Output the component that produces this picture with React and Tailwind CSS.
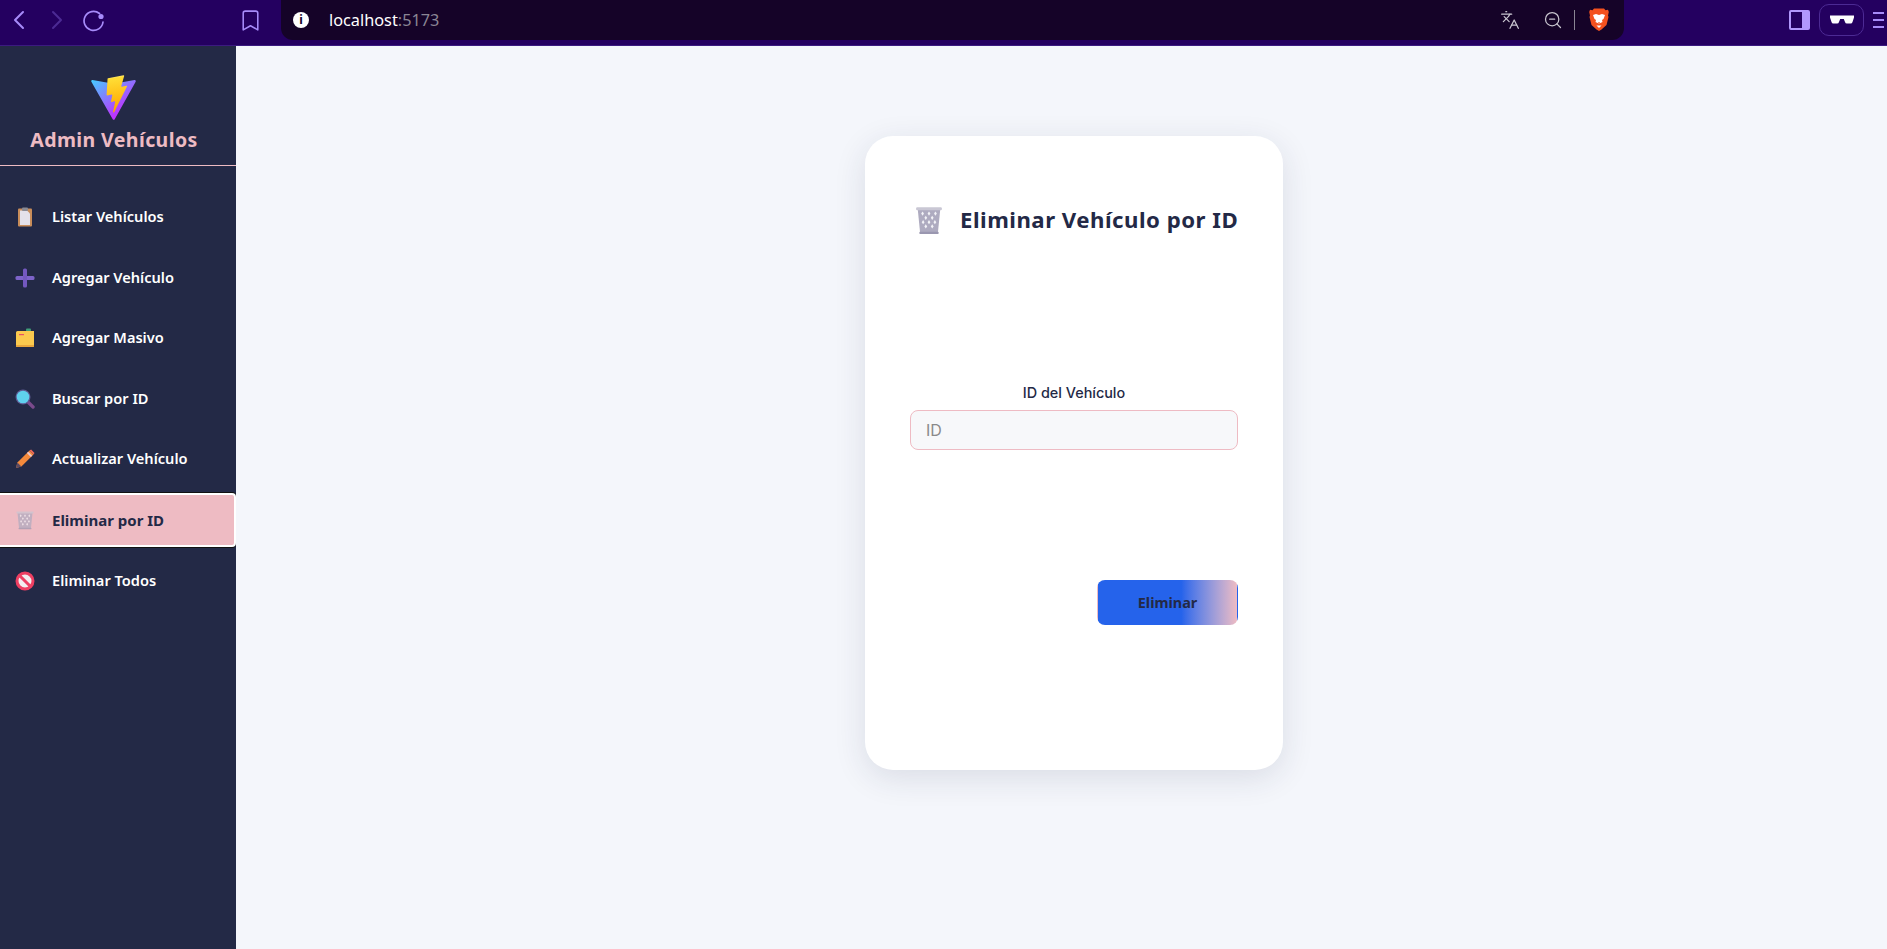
import { ChevronLeft, ChevronRight, Bookmark, Languages, ZoomOut } from 'lucide-react';

const FONT = "font-['Noto_Sans',sans-serif]";

function ViteLogo() {
  return (
    <svg className="mr-[2px]" width="47" height="46" viewBox="0 0 410 404" fill="none">
      <defs>
        <linearGradient id="vite-a" x1="6" y1="33" x2="235" y2="344" gradientUnits="userSpaceOnUse">
          <stop stopColor="#41D1FF" />
          <stop offset="1" stopColor="#BD34FE" />
        </linearGradient>
        <linearGradient id="vite-b" x1="194.651" y1="8.81818" x2="236.076" y2="292.989" gradientUnits="userSpaceOnUse">
          <stop stopColor="#FFEA83" />
          <stop offset="0.0833" stopColor="#FFDD35" />
          <stop offset="1" stopColor="#FFA800" />
        </linearGradient>
      </defs>
      <path d="M399.641 59.5246L215.643 388.545C211.844 395.338 202.084 395.378 198.228 388.618L10.5817 59.5563C6.38087 52.1896 12.6802 43.2665 21.0281 44.7586L205.223 77.6824C206.398 77.8924 207.601 77.8904 208.776 77.6763L389.119 44.8058C397.439 43.2894 403.768 52.1434 399.641 59.5246Z" fill="url(#vite-a)" />
      <path d="M292.965 1.5744L156.801 28.2552C154.563 28.6937 152.906 30.5903 152.771 32.8664L144.395 174.33C144.198 177.662 147.258 180.248 150.51 179.498L188.42 170.749C191.967 169.931 195.172 173.055 194.443 176.622L183.18 231.775C182.422 235.487 185.907 238.661 189.532 237.56L212.947 230.446C216.577 229.344 220.065 232.527 219.297 236.242L201.398 322.875C200.278 328.294 207.486 331.249 210.492 326.603L212.5 323.5L323.454 102.072C325.312 98.3645 322.108 94.137 318.036 94.9228L279.014 102.454C275.347 103.161 272.227 99.746 273.262 96.1583L298.731 7.86689C299.767 4.27314 296.636 0.855181 292.965 1.5744Z" fill="url(#vite-b)" />
    </svg>
  );
}

function ClipboardIcon() {
  return (
    <svg width="20" height="20" viewBox="0 0 20 20">
      <rect x="3" y="1.5" width="14" height="18" rx="1" fill="#c98d5a" />
      <path d="M5 3.5h7l3 3v11.5H5z" fill="#e4e1ea" />
      <rect x="7" y="0.5" width="6" height="3.5" rx="1" fill="#8a8a94" />
    </svg>
  );
}

function PlusIcon() {
  return (
    <svg width="20" height="20" viewBox="0 0 20 20">
      <rect x="0.5" y="8" width="19" height="4" rx="1.5" fill="#7d63c9" />
      <rect x="8" y="0.5" width="4" height="19" rx="1.5" fill="#7358bf" />
    </svg>
  );
}

function FolderIcon() {
  return (
    <svg width="20" height="20" viewBox="0 0 20 20">
      <rect x="11" y="0.5" width="5" height="3" rx="1" fill="#3f9e78" />
      <path d="M1 4.5a1.5 1.5 0 0 1 1.5-1.5H19v15a1 1 0 0 1-1 1H2a1 1 0 0 1-1-1z" fill="#fbc94e" />
      <path d="M1 17h18v1a1 1 0 0 1-1 1H2a1 1 0 0 1-1-1z" fill="#e9a63c" />
      <rect x="4" y="6" width="5" height="1.2" fill="#e8506a" />
    </svg>
  );
}

function SearchIcon() {
  return (
    <svg width="20" height="20" viewBox="0 0 20 20">
      <path d="M12 12l6 6" stroke="#7a4a8c" strokeWidth="3.4" strokeLinecap="round" />
      <circle cx="8" cy="8" r="7.5" fill="#5f5a94" />
      <circle cx="8" cy="8" r="6.3" fill="#5fd0ee" />
    </svg>
  );
}

function PencilIcon() {
  return (
    <svg width="20" height="20" viewBox="0 0 20 20">
      <path d="M1 19l1.4-5.4L14.5 1.5l4 4L6.4 17.6z" fill="#f58a3c" />
      <path d="M14.5 1.5l1.6-1 3.4 3.4-1 1.6z" fill="#f26a5a" />
      <path d="M13.2 2.8l4 4-1.3 1.3-4-4z" fill="#ecc9cf" />
      <path d="M1 19l1.4-5.4 4 4z" fill="#5b4a63" />
    </svg>
  );
}

const TRASH_HOLES = [
  [8, 8], [14, 8], [20, 8],
  [11, 12], [17, 12],
  [8.5, 16], [14, 16], [19.5, 16],
  [11, 20], [17, 20],
];

function TrashIcon({ size = 20 }) {
  return (
    <svg width={size} height={size} viewBox="0 0 28 28">
      <path d="M3.5 4h21l-2.2 22H5.700z" fill="#aeabc0" />
      {TRASH_HOLES.map(([x, y]) => (
        <path key={`${x}-${y}`} d={`M${x} ${y - 2}l1.300 2-1.300 2-1.300-2z`} fill="#f3f3f7" />
      ))}
      <rect x="2" y="2" width="24" height="3" rx="1" fill="#c9c7d4" />
      <rect x="5" y="25" width="18" height="2" rx="0.600" fill="#9a97b0" />
    </svg>
  );
}

function NoEntryIcon() {
  return (
    <svg width="20" height="20" viewBox="0 0 20 20">
      <circle cx="10" cy="10" r="8" fill="#f3eef0" stroke="#ee3f62" strokeWidth="3" />
      <path d="M4.500 4.500l11 11" stroke="#ee3f62" strokeWidth="3" />
    </svg>
  );
}

function BraveIcon() {
  return (
    <svg width="20" height="24" viewBox="0 0 20 24">
      <path d="M5 0.500h10l1.500 1.700 2.500-.5.800 2.300-.8 3.500.5 1.500-2 8-5 4.500-2.500 1.500-2.500-1.500-5-4.500-2-8 .5-1.500L.2 4l.8-2.300 2.500.5z" fill="#f4511e" />
      <path d="M4 7l3-1 3 1 3-1 3 1-1.500 4-1.500 1 .5 2-2 1-1.500.5-1.500-.5-2-1 .5-2-1.500-1z" fill="#fff" />
      <path d="M7.500 17.500h5L10 20z" fill="#fff" />
      <path d="M9 14h2l-1 1.200z" fill="#f4511e" />
    </svg>
  );
}

function ReloadIcon() {
  return (
    <svg width="24" height="24" viewBox="0 0 24 24" fill="none">
      <path d="M17.500 5.500A9.500 9.500 0 1 0 21 14" stroke="#a78bfa" strokeWidth="1.700" strokeLinecap="round" />
      <circle cx="19" cy="8.500" r="2.600" fill="#a78bfa" />
    </svg>
  );
}

function GlassesIcon() {
  return (
    <svg width="24" height="10" viewBox="0 0 24 10">
      <path d="M0 0.500h24v2l-1.500 4.500a2 2 0 0 1-2 1.500h-3.500a2 2 0 0 1-2-1.500L13.800 4h-3.600L9 7a2 2 0 0 1-2 1.500H3.500a2 2 0 0 1-2-1.500L0 2.500z" fill="#fff" />
    </svg>
  );
}

function BrowserBar() {
  return (
    <div className="flex h-[46px] shrink-0 border-b border-[#3b1a80] bg-[#240060]">
      <div className="flex w-[281px] shrink-0 items-center pb-[5px]">
        <ChevronLeft className="ml-[3px] text-[#a78bfa]" size={32} strokeWidth={1.5} />
        <ChevronRight className="ml-[6px] text-[#4c2a94]" size={32} strokeWidth={1.5} />
        <span className="ml-[9px]">
          <ReloadIcon />
        </span>
        <Bookmark className="ml-[132px] text-[#a78bfa]" size={25} strokeWidth={1.5} />
      </div>
      <div className="flex h-[40px] w-[1343px] items-center rounded-b-[12px] rounded-t-none bg-[#150328]">
        <span className="ml-[12px] flex h-4 w-4 items-center justify-center rounded-full bg-white text-[12px] font-bold leading-none text-[#150328]">
          i
        </span>
        <span className={`ml-[20px] text-[16.300px] text-white ${FONT}`}>
          localhost<span className="text-[#8a8594]">:5173</span>
        </span>
        <div className="ml-auto flex items-center pr-[15px]">
          <Languages className="text-[#c8c5cf]" size={20} strokeWidth={1.5} />
          <ZoomOut className="ml-[23px] text-[#c8c5cf]" size={20} strokeWidth={1.5} />
          <span className="ml-[11px] h-[20px] w-px bg-[#8a8594]" />
          <span className="ml-[14px] flex">
            <BraveIcon />
          </span>
        </div>
      </div>
      <div className="flex flex-1 items-center pb-[5px]">
        <span className="ml-[165px] flex h-[20px] w-[21px] justify-end rounded-[2px] border-2 border-[#b197fc]">
          <span className="h-full w-[6px] bg-[#b197fc]" />
        </span>
        <span className="ml-[9px] flex h-[32px] w-[45px] items-center justify-center rounded-[10px] border border-[#4c2a94]">
          <GlassesIcon />
        </span>
        <span className="ml-[9px] flex w-[11px] flex-col gap-[5px] overflow-hidden">
          <span className="h-[2px] w-[14px] bg-[#a78bfa]" />
          <span className="h-[2px] w-[14px] bg-[#a78bfa]" />
          <span className="h-[2px] w-[14px] bg-[#a78bfa]" />
        </span>
      </div>
    </div>
  );
}

const NAV_ITEMS = [
  { label: 'Listar Vehículos', icon: <ClipboardIcon /> },
  { label: 'Agregar Vehículo', icon: <PlusIcon /> },
  { label: 'Agregar Masivo', icon: <FolderIcon /> },
  { label: 'Buscar por ID', icon: <SearchIcon /> },
  { label: 'Actualizar Vehículo', icon: <PencilIcon /> },
  { label: 'Eliminar por ID', icon: <TrashIcon />, active: true },
  { label: 'Eliminar Todos', icon: <NoEntryIcon /> },
];

function Sidebar() {
  return (
    <aside className={`flex w-[236px] shrink-0 flex-col bg-[#232946] ${FONT}`}>
      <div className="flex h-[120px] flex-col items-center border-b border-[#eebbc3] pt-[29px] pr-[8px]">
        <ViteLogo />
        <h1 className="mt-[5px] text-[19.500px] font-bold leading-[28px] tracking-[0.4px] text-[#eebbc3]">
          Admin Vehículos
        </h1>
      </div>
      <nav className="mt-[24px] flex flex-col gap-[6.6px]">
        {NAV_ITEMS.map((item) => (
          <div
            key={item.label}
            className={`flex h-[54px] items-center pl-[15px] ${
              item.active
                ? 'rounded-r-[4px] border-y-2 border-r-2 border-white bg-[#eebbc3] text-[15px] font-bold text-[#232946] shadow-[0_-1px_0_#111,0_1px_0_#111]'
                : 'text-[14.600px] font-semibold text-white'
            }`}
          >
            <span className={`flex w-[37px] shrink-0 ${item.active ? 'opacity-70' : ''}`}>{item.icon}</span>
            {item.label}
          </div>
        ))}
      </nav>
    </aside>
  );
}

function DeleteCard() {
  return (
    <div className="flex h-[634px] w-[418px] flex-col rounded-[28px] bg-white px-[45px] pt-[66px] shadow-[0_8px_32px_rgba(35,41,70,0.12)]">
      <h2 className={`flex h-[36px] items-center pl-[4px] text-[22.200px] font-bold tracking-[0.5px] whitespace-nowrap text-[#232946] ${FONT}`}>
        <span className="mr-[16px] flex">
          <TrashIcon size={30} />
        </span>
        Eliminar Vehículo por ID
      </h2>
      <label className="mt-[143px] text-center text-[14.400px] font-medium leading-[24px] text-[#232946] font-['Inter',sans-serif]">
        ID del Vehículo
      </label>
      <input
        placeholder="ID"
        className="mt-[5px] h-[40px] w-full rounded-[8px] border border-[#eebbc3] bg-[#f7f8fa] px-[15px] font-['Inter',sans-serif] text-[16px] text-[#232946] placeholder-[#8a8a8a] outline-none"
      />
      <div className="mt-[130px] flex justify-end">
        <button className={`h-[45px] w-[141px] cursor-pointer rounded-[8px] border border-transparent bg-linear-to-r from-[#2563eb] from-60% to-[#eebbc3] text-[14.400px] font-bold text-[#232946] ${FONT}`}>
          Eliminar
        </button>
      </div>
    </div>
  );
}

export default function App() {
  return (
    <div className="flex h-[949px] flex-col overflow-hidden bg-[#f4f6fb]">
      <BrowserBar />
      <div className="flex flex-1">
        <Sidebar />
        <main className="flex flex-1 justify-center pt-[90px] pl-[25px]">
          <DeleteCard />
        </main>
      </div>
    </div>
  );
}
